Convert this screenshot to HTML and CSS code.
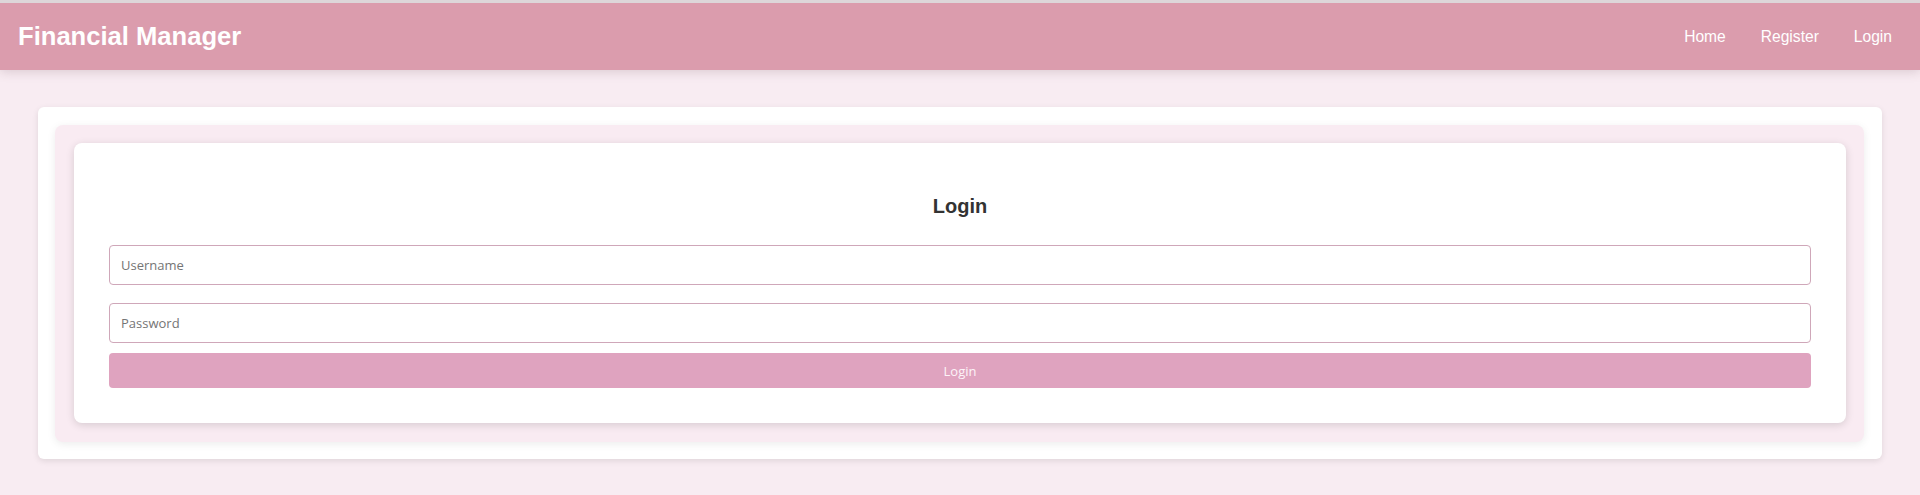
FILE: index.html
```html
<!DOCTYPE html>
<html lang="en">
<head>
<meta charset="utf-8">
<title>Financial Manager - Login</title>
<link rel="stylesheet" href="styles.css">
</head>
<body>
<header class="navbar">
  <div class="brand">Financial Manager</div>
  <nav class="nav-links">
    <a href="#" class="nav-link">Home</a>
    <a href="#" class="nav-link">Register</a>
    <a href="#" class="nav-link">Login</a>
  </nav>
</header>
<main class="main">
  <div class="outer-card">
    <div class="panel">
      <div class="login-card">
        <h2 class="login-title">Login</h2>
        <form class="login-form">
          <input class="field" type="text" placeholder="Username">
          <input class="field field-password" type="password" placeholder="Password">
          <button class="login-btn" type="button">Login</button>
        </form>
      </div>
    </div>
  </div>
</main>
</body>
</html>
```
FILE: styles.css
```css
* { box-sizing: border-box; }
html, body { margin: 0; padding: 0; }
body {
  background: #f8ecf2;
  font-family: "Liberation Sans", Arial, sans-serif;
  height: 495px;
  overflow: hidden;
}
.navbar {
  height: 70px;
  border-top: 3px solid #ddd6d9;
  background: #db9cad;
  display: flex;
  align-items: center;
  justify-content: space-between;
  padding: 0 20px 0 18px;
  box-shadow: 0 2px 10px rgba(120, 80, 95, 0.22);
  position: relative;
  z-index: 1;
}
.brand {
  color: #ffffff;
  font-weight: bold;
  font-size: 25.6px;
}
.nav-links {
  display: flex;
  gap: 19px;
}
.nav-link {
  color: #ffffff;
  text-decoration: none;
  font-size: 15.6px;
  padding: 8px;
}
.main {
  padding: 37px 38px 0;
}
.outer-card {
  background: #ffffff;
  border-radius: 6px;
  padding: 18px 18px 17px 17px;
  box-shadow: 0 2px 6px rgba(0, 0, 0, 0.1);
}
.panel {
  background: #f9ebf2;
  border-radius: 8px;
  padding: 18px 18px 19px 19px;
  box-shadow: 0 2px 8px rgba(0, 0, 0, 0.08);
}
.login-card {
  background: #ffffff;
  border-radius: 8px;
  padding: 35px 35px 35px 35px;
  box-shadow: 0 2px 8px rgba(0, 0, 0, 0.14);
}
.login-title {
  margin: 16px 0 27px;
  text-align: center;
  font-size: 20px;
  line-height: 24px;
  color: #333333;
  font-weight: bold;
}
.login-form {
  display: flex;
  flex-direction: column;
}
.field {
  display: block;
  width: 100%;
  height: 40px;
  border: 1px solid #cfa7b9;
  border-radius: 4px;
  padding: 0 11px;
  font-family: "Open Sans", "Noto Sans", sans-serif;
  font-size: 13px;
  color: #333;
  background: #fff;
  outline: none;
}
.field::placeholder { color: #757575; }
.field-password { margin-top: 18px; }
.login-btn {
  margin-top: 10px;
  height: 35px;
  width: 100%;
  border: none;
  border-radius: 4px;
  background: #dfa3bf;
  color: #fdf3f8;
  font-family: "Open Sans", "Noto Sans", sans-serif;
  font-size: 13px;
  cursor: pointer;
}
```
